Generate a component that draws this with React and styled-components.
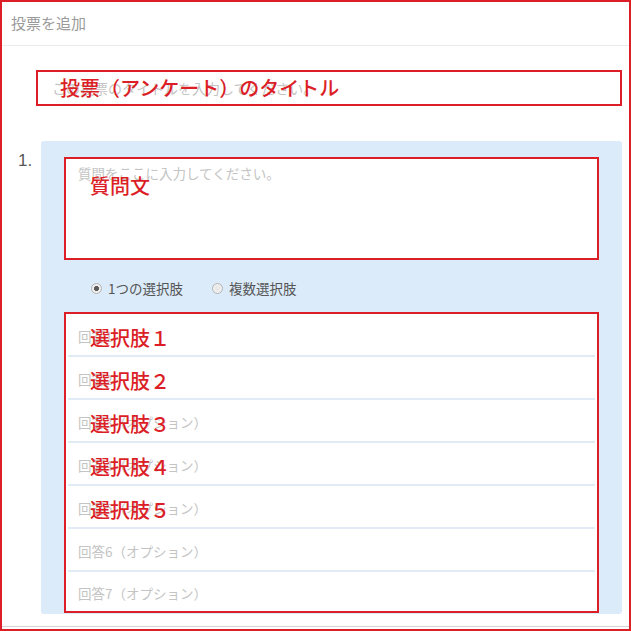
import styled, { createGlobalStyle } from 'styled-components';

const RED = '#dc1e26';

const GlobalStyle = createGlobalStyle`
  body {
    margin: 0;
    background: #fff;
    font-family: "Noto Sans CJK JP", "Noto Sans", sans-serif;
  }
`;

const Frame = styled.div`
  width: 631px;
  height: 631px;
  box-sizing: border-box;
  border: 2px solid ${RED};
  display: flex;
  flex-direction: column;
  background: #fff;
  overflow: hidden;
`;

const Header = styled.div`
  flex: none;
  height: 44px;
  box-sizing: border-box;
  border-bottom: 1px solid #ececec;
  padding: 0 0 3px 9px;
  display: flex;
  align-items: center;
  font-size: 15px;
  color: #9a9a9a;
`;

const Body = styled.div`
  flex: 1;
  min-height: 0;
  overflow: hidden;
  padding-top: 24px;
  margin-bottom: 2px;
  border-bottom: 1px solid #d4d4d4;
`;

const TitleBox = styled.div`
  position: relative;
  height: 36px;
  box-sizing: border-box;
  margin: 0 7px 0 34px;
  border: 2px solid ${RED};
  display: flex;
  align-items: center;
  padding-left: 14px;
  font-size: 14px;
  color: #c4c4c4;
`;

// red annotation text laid over the form
const Note = styled.span`
  position: absolute;
  left: ${(p) => p.$left}px;
  top: ${(p) => p.$top}px;
  color: ${RED};
  font-size: 20px;
  font-weight: 500;
  line-height: 1;
  white-space: nowrap;
`;

const QuestionRow = styled.div`
  display: flex;
  margin-top: 35px;
`;

const Number = styled.div`
  width: 39px;
  flex: none;
  box-sizing: border-box;
  padding: 10px 0 0 16px;
  font-family: "Liberation Sans", Arial, sans-serif;
  font-size: 17px;
  line-height: 20px;
  color: #555;
`;

const Panel = styled.div`
  width: 581px;
  flex: none;
  box-sizing: border-box;
  background: #dcebfa;
  border-radius: 3px;
  padding: 16px 23px 1px;
`;

const QuestionBox = styled.div`
  position: relative;
  height: 103px;
  box-sizing: border-box;
  border: 2px solid ${RED};
  background: #fff;
  padding: 5px 12px;
  font-size: 13.5px;
  line-height: 18px;
  color: #c4c4c4;
`;

const RadioRow = styled.div`
  height: 52px;
  box-sizing: border-box;
  display: flex;
  align-items: center;
  gap: 29px;
  padding: 4px 0 0 27px;
  font-size: 13.5px;
  color: #555;
`;

const RadioItem = styled.label`
  display: flex;
  align-items: center;
  gap: 6px;
`;

const RadioDot = styled.span`
  width: 11px;
  height: 11px;
  box-sizing: border-box;
  border-radius: 50%;
  border: 1px solid #b4b4b4;
  background: radial-gradient(circle, ${(p) => (p.$checked ? '#5a5a5a 0 2.2px, #eee 2.8px' : '#e6e6e6 0, #f4f4f4 100%')});
`;

const OptionList = styled.div`
  display: flex;
  flex-direction: column;
  border: 2px solid ${RED};
  background: #fff;
`;

const OptionRow = styled.div`
  position: relative;
  flex: none;
  height: 43px;
  box-sizing: border-box;
  margin: 0 2px;
  border-bottom: 2px solid #e1ebf6;
  display: flex;
  align-items: center;
  padding: 3px 0 0 10px;
  font-size: 13.5px;
  color: #c4c4c4;

  &:last-child {
    height: 39px;
    border-bottom: none;
  }
`;

const options = [
  { placeholder: '回答1', note: '選択肢１' },
  { placeholder: '回答2', note: '選択肢２' },
  { placeholder: '回答3（オプション）', note: '選択肢３' },
  { placeholder: '回答4（オプション）', note: '選択肢４' },
  { placeholder: '回答5（オプション）', note: '選択肢５' },
  { placeholder: '回答6（オプション）' },
  { placeholder: '回答7（オプション）' },
];

export default function App() {
  return (
    <>
      <GlobalStyle />
      <Frame>
        <Header>投票を追加</Header>
        <Body>
          <TitleBox>
            この投票のタイトルを入力してください。
            <Note $left={22} $top={6}>投票（アンケート）のタイトル</Note>
          </TitleBox>
          <QuestionRow>
            <Number>1.</Number>
            <Panel>
              <QuestionBox>
                質問をここに入力してください。
                <Note $left={24} $top={17}>質問文</Note>
              </QuestionBox>
              <RadioRow>
                <RadioItem>
                  <RadioDot $checked />
                  1つの選択肢
                </RadioItem>
                <RadioItem>
                  <RadioDot />
                  複数選択肢
                </RadioItem>
              </RadioRow>
              <OptionList>
                {options.map((o) => (
                  <OptionRow key={o.placeholder}>
                    {o.placeholder}
                    {o.note && (
                      <Note $left={22} $top={14}>
                        {o.note}
                      </Note>
                    )}
                  </OptionRow>
                ))}
              </OptionList>
            </Panel>
          </QuestionRow>
        </Body>
      </Frame>
    </>
  );
}
